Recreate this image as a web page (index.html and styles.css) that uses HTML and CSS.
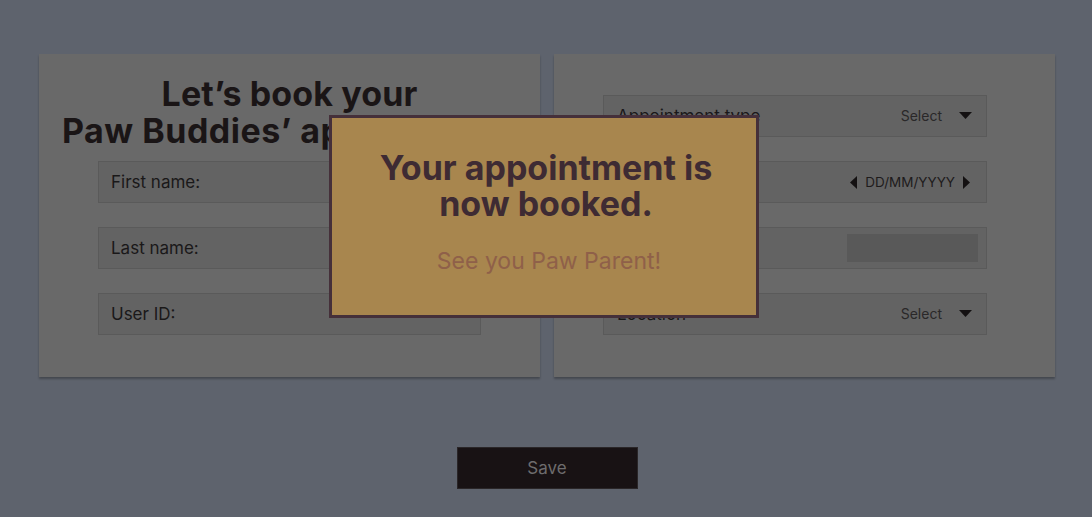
FILE: index.html
```html
<!DOCTYPE html>
<html lang="en">
<head>
<meta charset="utf-8">
<title>Book appointment</title>
<link rel="stylesheet" href="styles.css">
</head>
<body>
<main class="page">
  <div class="cards">
    <section class="card card-left">
      <h1 class="title"><span class="title-line">Let’s book your</span><span class="title-line title-wide">Paw Buddies’ appointment</span></h1>
      <div class="fields fields-left">
        <div class="field"><span class="label">First name:</span></div>
        <div class="field"><span class="label">Last name:</span></div>
        <div class="field"><span class="label">User ID:</span></div>
      </div>
    </section>
    <section class="card card-right">
      <div class="fields fields-right">
        <div class="field field-sm">
          <span class="label">Appointment type</span>
          <span class="select">Select <svg class="tri-down" width="13" height="7" viewBox="0 0 13 7"><path d="M0 0H13L6.5 7Z"/></svg></span>
        </div>
        <div class="field field-sm">
          <span class="label">Date</span>
          <span class="date"><svg class="tri" width="7" height="13" viewBox="0 0 7 13"><path d="M7 0V13L0 6.5Z"/></svg><span>DD/MM/YYYY</span><svg class="tri" width="7" height="13" viewBox="0 0 7 13"><path d="M0 0V13L7 6.5Z"/></svg></span>
        </div>
        <div class="field field-sm">
          <span class="label">Time</span>
          <span class="input-box"></span>
        </div>
        <div class="field field-sm">
          <span class="label">Location</span>
          <span class="select">Select <svg class="tri-down" width="13" height="7" viewBox="0 0 13 7"><path d="M0 0H13L6.5 7Z"/></svg></span>
        </div>
      </div>
    </section>
  </div>
  <div class="actions">
    <button class="save" type="button">Save</button>
  </div>
  <div class="modal" role="dialog">
    <h2 class="modal-title">Your appointment is<br>now booked.</h2>
    <p class="modal-sub">See you Paw Parent!</p>
  </div>
</main>
</body>
</html>
```
FILE: styles.css
```css
* { box-sizing: border-box; }
html, body { margin: 0; padding: 0; }
body {
  background: #5e636d;
  font-family: Inter, "Noto Sans", "Liberation Sans", sans-serif;
  width: 1092px;
  height: 517px;
  overflow: hidden;
}
.page {
  position: relative;
  width: 1092px;
  height: 517px;
  padding: 54px 0 0 39px;
}
.cards {
  display: flex;
  gap: 14px;
}
.card {
  width: 501px;
  height: 323px;
  background: #696969;
  box-shadow: 0 2px 2px rgba(0, 0, 0, 0.28);
}
.card-left {
  padding-top: 21px;
  padding-left: 59px;
}
.title {
  margin: 0 0 12px -59px;
  width: 501px;
  text-align: center;
  font-size: 34px;
  line-height: 37px;
  font-weight: 700;
  letter-spacing: 0.1px;
  color: #1a1516;
}
.title-line { display: block; white-space: nowrap; }
.title-wide { letter-spacing: 0.5px; }
.fields {
  display: flex;
  flex-direction: column;
  gap: 24px;
}
.field {
  width: 383px;
  height: 42px;
  border: 1px solid #5a5a5a;
  background: #636363;
  display: flex;
  align-items: center;
  padding-left: 12px;
  font-size: 17px;
  color: #1a1819;
}
.card-right {
  padding-top: 41px;
  padding-left: 49px;
}
.fields-right .field { width: 384px; }
.fields-right { gap: 24px; }
.field-sm {
  justify-content: space-between;
  padding-left: 13px;
  padding-right: 14px;
}
.select {
  display: flex;
  align-items: center;
  gap: 17px;
  font-size: 14px;
  color: #2a2829;
  margin-top: -2px;
}
.tri-down, .tri { fill: #141112; display: block; }
.date {
  display: flex;
  align-items: center;
  gap: 8px;
  font-size: 13.5px;
  color: #1e1b1c;
  margin-right: 2px;
}
.input-box {
  width: 131px;
  height: 28px;
  background: #595959;
  margin-right: -6px;
}
.actions {
  display: flex;
  justify-content: center;
  padding-top: 70px;
  margin-left: -39px;
  padding-left: 2px;
}
.save {
  width: 181px;
  height: 42px;
  background: #181214;
  border: 1px solid #2a2628;
  color: #6e6c6d;
  font-family: inherit;
  font-size: 17px;
}
.modal {
  position: absolute;
  left: 329px;
  top: 115px;
  width: 430px;
  height: 203px;
  background: #a8864e;
  border: 3px solid #45303a;
  text-align: center;
  padding-top: 32px;
  padding-left: 4px;
}
.modal-title {
  margin: 0;
  font-size: 34px;
  line-height: 36px;
  font-weight: 700;
  color: #3e2b33;
}
.modal-sub {
  margin: 26px 0 0;
  padding-left: 6px;
  font-size: 23px;
  line-height: 26px;
  color: #8f6049;
}
```
